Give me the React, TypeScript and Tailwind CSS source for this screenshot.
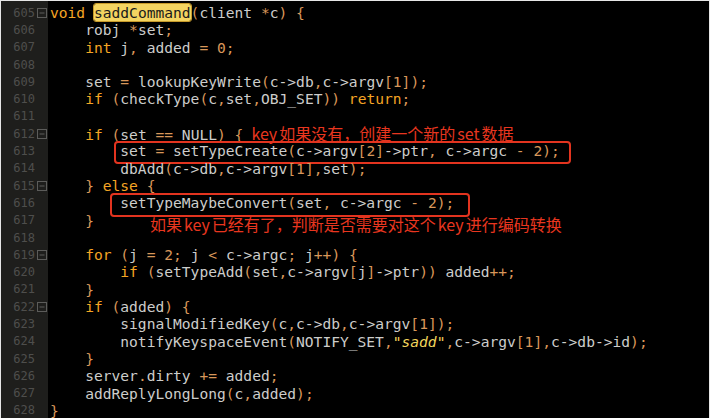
const LINES: string[] = [
  "void saddCommand(client *c) {",
  "    robj *set;",
  "    int j, added = 0;",
  "",
  "    set = lookupKeyWrite(c->db,c->argv[1]);",
  "    if (checkType(c,set,OBJ_SET)) return;",
  "",
  "    if (set == NULL) {",
  "        set = setTypeCreate(c->argv[2]->ptr, c->argc - 2);",
  "        dbAdd(c->db,c->argv[1],set);",
  "    } else {",
  "        setTypeMaybeConvert(set, c->argc - 2);",
  "    }",
  "",
  "    for (j = 2; j < c->argc; j++) {",
  "        if (setTypeAdd(set,c->argv[j]->ptr)) added++;",
  "    }",
  "    if (added) {",
  "        signalModifiedKey(c,c->db,c->argv[1]);",
  '        notifyKeyspaceEvent(NOTIFY_SET,"sadd",c->argv[1],c->db->id);',
  "    }",
  "    server.dirty += added;",
  "    addReplyLongLong(c,added);",
  "}",
];

const FOLDS = new Set([605, 612, 615, 619, 622]);
const KEYWORDS = new Set(["void", "int", "if", "else", "for", "return"]);

function Token({ t }: { t: string }) {
  if (t === "saddCommand") {
    return (
      <span className="bg-[#f3d461] text-[#1a1a1a] rounded-[2px] outline outline-1 outline-[#c79a2a]">{t}</span>
    );
  }
  if (t.startsWith('"')) {
    return (
      <span className="text-[#f2d55c]">
        "<span className="italic">{t.slice(1, -1)}</span>"
      </span>
    );
  }
  if (KEYWORDS.has(t)) return <span className="text-[#f5a524]">{t}</span>;
  if (/^\d+$/.test(t)) return <span className="text-[#d9975a]">{t}</span>;
  if (t === "->" || /^\s+$/.test(t) || /^[A-Za-z_]/.test(t)) return <span>{t}</span>;
  return <span className="text-[#d9975a]">{t}</span>;
}

function tokenize(line: string): string[] {
  return line.match(/"[^"]*"|[A-Za-z_][A-Za-z0-9_]*|\d+|->|\+\+|\+=|==|\s+|./g) ?? [];
}

// latin words inside the Chinese notes get a little air, like the original
function Note({ text }: { text: string }) {
  const parts = text.split(/([A-Za-z]+)/).filter(Boolean);
  return (
    <>
      {parts.map((p, i) =>
        /^[A-Za-z]+$/.test(p) ? (
          <span key={i} className="mx-[2px]">{p}</span>
        ) : (
          <span key={i}>{p}</span>
        )
      )}
    </>
  );
}

function FoldBox() {
  return (
    <svg width="10" height="10" viewBox="0 0 10 10" className="shrink-0">
      <rect x="0.5" y="0.5" width="9" height="9" fill="none" stroke="#5c5c5a" />
      <line x1="2.5" y1="5" x2="7.5" y2="5" stroke="#5c5c5a" />
    </svg>
  );
}

export default function App() {
  return (
    <div className="w-[710px] h-[418px] overflow-hidden bg-black border-t border-l border-r border-[#e6e6e6] flex">
      {/* Gutter */}
      <div className="w-[47px] shrink-0 bg-[#1e1e1c] pt-[3px] font-['DejaVu_Sans_Mono',monospace] text-[12px] text-[#4e4e4c]">
        {LINES.map((_, i) => {
          const n = 605 + i;
          return (
            <div key={n} className="h-[17.3px] flex items-center">
              <span className="w-[35px] text-right pr-[1px]">{n}</span>
              <span className="w-[12px] flex justify-center">{FOLDS.has(n) && <FoldBox />}</span>
            </div>
          );
        })}
      </div>

      {/* Code */}
      <div className="flex-1 pt-[3px] pl-[2px] font-['DejaVu_Sans_Mono',monospace] text-[14.6px] text-[#cdcdcb] whitespace-pre">
        {LINES.map((line, i) => {
          const n = 605 + i;
          return (
            <div key={n} className="relative h-[17.3px] leading-[17.3px]">
              {tokenize(line).map((t, k) => (
                <Token key={k} t={t} />
              ))}
              {n === 612 && (
                <span className="ml-[6px] font-['Noto_Sans_CJK_SC',sans-serif] text-[16px] text-[#e8361f]">
                  <Note text="key如果没有，创建一个新的set数据" />
                </span>
              )}
              {n === 613 && (
                <div className="absolute left-[64px] top-[-1px] w-[457px] h-[23px] border-2 border-[#e3341f] rounded-[4px]" />
              )}
              {n === 616 && (
                <div className="absolute left-[60px] top-[-1.5px] w-[360px] h-[24px] border-2 border-[#e3341f] rounded-[4px]" />
              )}
              {n === 617 && (
                <span className="absolute left-[100px] top-[4px] font-['Noto_Sans_CJK_SC',sans-serif] text-[16px] leading-[17px] text-[#e8361f]">
                  <Note text="如果key已经有了，判断是否需要对这个key进行编码转换" />
                </span>
              )}
            </div>
          );
        })}
      </div>
    </div>
  );
}
